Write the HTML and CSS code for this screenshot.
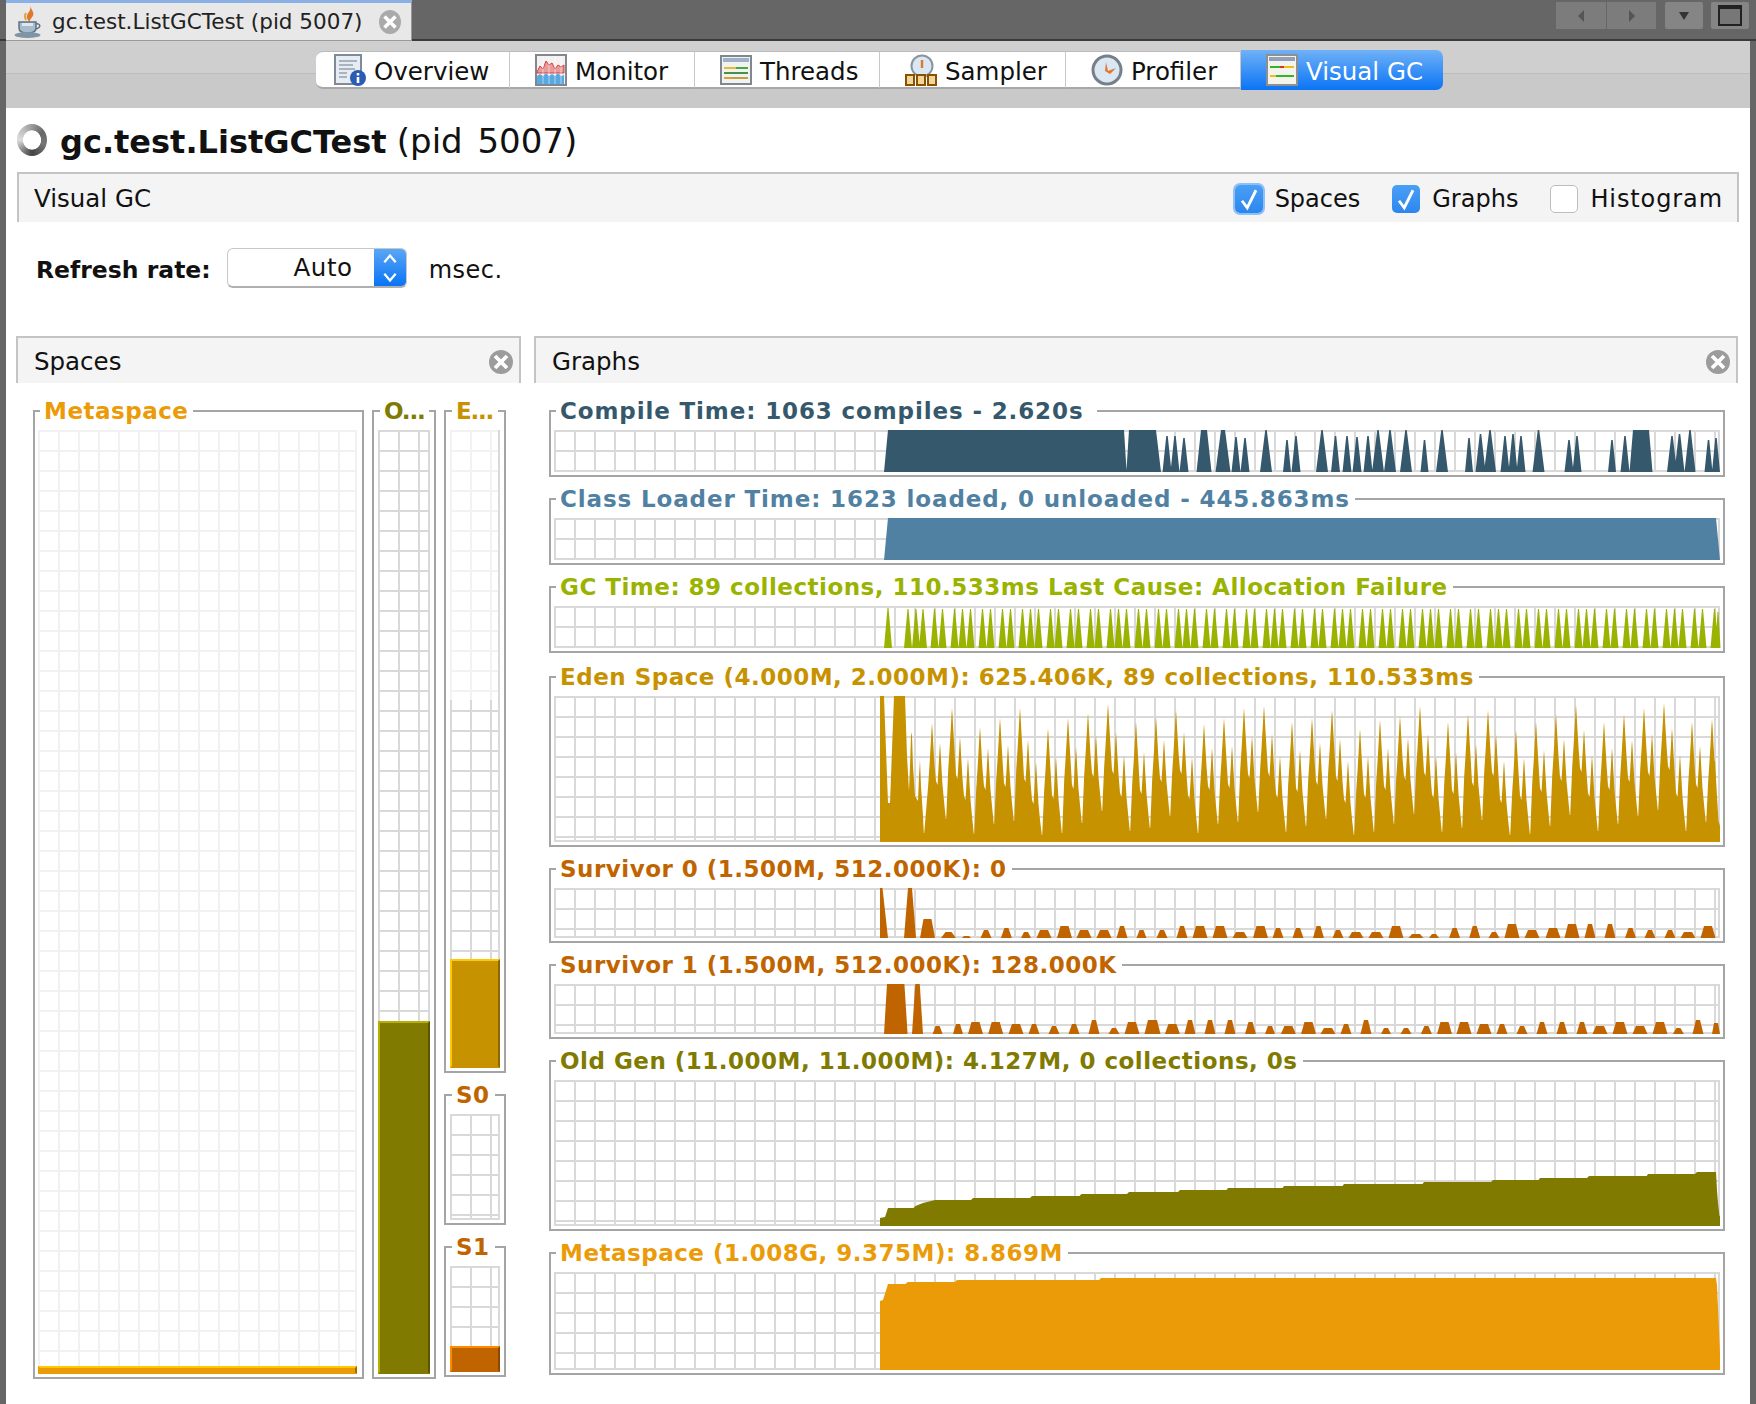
FILE: index.html
```html
<!DOCTYPE html>
<html lang="en">
<head>
    <meta charset="UTF-8">
    <title>gc.test.ListGCTest (pid 5007)</title>
    <link rel="stylesheet" href="styles.css">
</head>
<body>

<div class="doc-bar">
    <div class="doc-tab">
        <svg class="java-icon" viewBox="0 0 28 32" width="28" height="32">
            <path d="M16 0c2 5-4 7-3 12 .4 2 2 3 3 4-1-4 5-5 3-10-1-2-2-4-3-6z" fill="#e0772a"/>
            <path d="M12 7c-2 3-1 5 0 7" fill="none" stroke="#e8a030" stroke-width="2"/>
            <path d="M5 16h17v6c0 3-3 5-8.500 5S5 25 5 22z" fill="#a9bccb" stroke="#5d7384" stroke-width="1.500"/>
            <path d="M22 18c4-1 6 3 0 5" fill="none" stroke="#5d7384" stroke-width="1.500"/>
            <path d="M8 17h11v3H8z" fill="#dfe7ee"/>
            <ellipse cx="13.500" cy="29" rx="13" ry="3" fill="#7f94a5"/>
        </svg>
        <span class="doc-tab-name">gc.test.ListGCTest (pid 5007)</span>
        <span class="close-dot close-dot-tab">
            <svg viewBox="0 0 10 10"><path d="M2.500 2.500l5 5M7.500 2.500l-5 5" stroke="#fff" stroke-width="1.600"/></svg>
        </span>
    </div>
    <div class="win-controls">
        <div class="win-btn win-btn-nav">
            <svg viewBox="0 0 10 14" width="10" height="14"><path d="M8 1v12L2 7z" fill="#555"/></svg>
        </div>
        <div class="win-btn win-btn-nav win-btn-next">
            <svg viewBox="0 0 10 14" width="10" height="14"><path d="M2 1v12l6-6z" fill="#555"/></svg>
        </div>
        <div class="win-btn win-btn-menu">
            <svg viewBox="0 0 12 10" width="12" height="10"><path d="M1 1h10L6 9z" fill="#333"/></svg>
        </div>
        <div class="win-btn win-btn-max"><span class="max-icon"></span></div>
    </div>
</div>

<div class="content">
    <div class="view-bar">
        <div class="view-btn view-btn-first">
            <svg viewBox="0 0 32 32" width="32" height="32">
                <rect x="1" y="1" width="26" height="29" fill="#e6ecf2" stroke="#7f8c98" stroke-width="2"/>
                <path d="M5 7h18M5 11h14M5 15h16M5 19h8M5 23h8" stroke="#a7b4c0" stroke-width="2"/>
                <circle cx="24" cy="24" r="8" fill="#2a5bb5"/>
                <rect x="22.700" y="23" width="2.600" height="6" fill="#fff"/>
                <rect x="22.700" y="19" width="2.600" height="2.500" fill="#fff"/>
            </svg>
            <span>Overview</span>
        </div>
        <div class="view-btn">
            <svg viewBox="0 0 32 32" width="32" height="32">
                <rect x="1" y="1" width="30" height="30" fill="#f6f0f0" stroke="#7f8890" stroke-width="2"/>
                <path d="M2 18l3-6 3 3 3-8 3 4 3-2 3 6 3-4 3 2 3-2v8H2z" fill="#ea9a9a" stroke="#d04040"/>
                <path d="M2 22l3-2 3 2 3-3 3 3 3-2 3 2 3-3 3 3 3-1v9H2z" fill="#5aa8e0"/>
                <path d="M8 2v28M14 2v28M20 2v28M26 2v28" stroke="#fff" stroke-opacity=".5"/>
            </svg>
            <span>Monitor</span>
        </div>
        <div class="view-btn">
            <svg viewBox="0 0 32 32" width="32" height="32">
                <rect x="1" y="2" width="30" height="28" fill="#f2f3f0" stroke="#7f8890" stroke-width="2"/>
                <rect x="3" y="4" width="26" height="4" fill="#9fb0c8"/>
                <path d="M4 14h12" stroke="#e0c030" stroke-width="2"/>
                <path d="M16 14h12" stroke="#3fae3f" stroke-width="2"/>
                <path d="M4 19h24" stroke="#4a8f4a" stroke-width="2"/>
                <path d="M4 24h8" stroke="#e0a030" stroke-width="2"/>
                <path d="M12 24h16" stroke="#c0a040" stroke-width="2"/>
            </svg>
            <span>Threads</span>
        </div>
        <div class="view-btn">
            <svg viewBox="0 0 32 32" width="32" height="32">
                <circle cx="17" cy="12" r="10.500" fill="#dbe7f2" stroke="#8a949e" stroke-width="2"/>
                <path d="M17 6v8" stroke="#e0772a" stroke-width="2.400"/>
                <rect x="1" y="21" width="8" height="10" fill="#f0d69a" stroke="#8a5200" stroke-width="2"/>
                <rect x="12" y="21" width="8" height="10" fill="#f0d69a" stroke="#8a5200" stroke-width="2"/>
                <rect x="23" y="21" width="8" height="10" fill="#f0d69a" stroke="#8a5200" stroke-width="2"/>
            </svg>
            <span>Sampler</span>
        </div>
        <div class="view-btn">
            <svg viewBox="0 0 32 32" width="32" height="32">
                <circle cx="16" cy="16" r="14" fill="#dbe8f4" stroke="#77808a" stroke-width="3"/>
                <path d="M15 8l2 9 8-3-6 6-5-3z" fill="#e0772a"/>
            </svg>
            <span>Profiler</span>
        </div>
        <div class="view-btn view-btn-active">
            <svg viewBox="0 0 32 32" width="32" height="32">
                <rect x="1" y="1" width="30" height="30" fill="#f4f4ec" stroke="#8f8f8f" stroke-width="2"/>
                <rect x="3" y="3" width="26" height="4" fill="#8ea0bc"/>
                <path d="M4 13h10" stroke="#2fb52f" stroke-width="2"/>
                <path d="M14 13h4" stroke="#e03020" stroke-width="2"/>
                <path d="M18 13h10" stroke="#e8c020" stroke-width="2"/>
                <path d="M4 22h6" stroke="#e8c020" stroke-width="2"/>
                <path d="M10 22h18" stroke="#2fb52f" stroke-width="2"/>
            </svg>
            <span>Visual GC</span>
        </div>
    </div>

    <div class="title-row">
        <span class="busy-ring"></span>
        <h1 class="title"><b>gc.test.ListGCTest</b> <span class="title-pid">(pid 5007)</span></h1>
    </div>

    <div class="section-head section-head-main">
        <span class="section-name">Visual GC</span>
        <div class="checks">
            <div class="check-item">
                <span class="check check-on check-focus"><svg viewBox="0 0 16 16"><path d="M4 9l3 4 5-10" fill="none" stroke="#fff" stroke-width="1.600"/></svg></span>
                <span>Spaces</span>
            </div>
            <div class="check-item">
                <span class="check check-on"><svg viewBox="0 0 16 16"><path d="M4 9l3 4 5-10" fill="none" stroke="#fff" stroke-width="1.600"/></svg></span>
                <span>Graphs</span>
            </div>
            <div class="check-item">
                <span class="check"></span>
                <span class="check-label-wide">Histogram</span>
            </div>
        </div>
    </div>

    <div class="refresh-row">
        <b>Refresh rate:</b>
        <div class="rate-select">
            <span class="rate-value">Auto</span>
            <span class="rate-arrows">
                <svg viewBox="0 0 14 30" width="16" height="34"><path d="M2 10l5-6 5 6M2 20l5 6 5-6" fill="none" stroke="#fff" stroke-width="2"/></svg>
            </span>
        </div>
        <span class="rate-unit">msec.</span>
    </div>

    <div class="panels">
        <section class="panel panel-spaces">
            <div class="section-head">
                <span>Spaces</span>
                <span class="close-dot"><svg viewBox="0 0 10 10"><path d="M2.500 2.500l5 5M7.500 2.500l-5 5" stroke="#fff" stroke-width="1.600"/></svg></span>
            </div>
            <div class="spaces-body">
                <fieldset class="box box-meta">
                    <legend class="c-meta">Metaspace</legend>
                    <div class="plot plot-light plot-fill plot-h944">
                        <div class="bar bar-meta"></div>
                    </div>
                </fieldset>
                <fieldset class="box box-old">
                    <legend class="c-old legend-short">O...</legend>
                    <div class="plot plot-fill plot-h944">
                        <div class="bar bar-old"></div>
                    </div>
                </fieldset>
                <div class="young-col">
                    <fieldset class="box box-eden">
                        <legend class="c-eden legend-short">E...</legend>
                        <div class="plot plot-fill plot-h638">
                            <div class="uncommitted"></div>
                            <div class="bar bar-eden"></div>
                        </div>
                    </fieldset>
                    <fieldset class="box box-surv">
                        <legend class="c-surv">S0</legend>
                        <div class="plot plot-fill plot-h106"></div>
                    </fieldset>
                    <fieldset class="box box-surv">
                        <legend class="c-surv">S1</legend>
                        <div class="plot plot-fill plot-h106">
                            <div class="bar bar-surv"></div>
                        </div>
                    </fieldset>
                </div>
            </div>
        </section>

        <section class="panel panel-graphs">
            <div class="section-head">
                <span>Graphs</span>
                <span class="close-dot"><svg viewBox="0 0 10 10"><path d="M2.500 2.500l5 5M7.500 2.500l-5 5" stroke="#fff" stroke-width="1.600"/></svg></span>
            </div>
            <div class="graphs-body">
                <fieldset class="box">
                    <legend class="c-compile legend-wide">Compile Time: 1063 compiles - 2.620s&nbsp;</legend>
                    <div class="plot plot-h42"><svg class="chart c-compile" data-chart="compile" preserveAspectRatio="none"></svg></div>
                </fieldset>
                <fieldset class="box">
                    <legend class="c-class legend-wide">Class Loader Time: 1623 loaded, 0 unloaded - 445.863ms</legend>
                    <div class="plot plot-h42"><svg class="chart c-class" data-chart="classes" preserveAspectRatio="none"></svg></div>
                </fieldset>
                <fieldset class="box">
                    <legend class="c-gc">GC Time: 89 collections, 110.533ms Last Cause: Allocation Failure</legend>
                    <div class="plot plot-h42"><svg class="chart c-gc" data-chart="gc" preserveAspectRatio="none"></svg></div>
                </fieldset>
                <fieldset class="box box-graph-eden">
                    <legend class="c-eden">Eden Space (4.000M, 2.000M): 625.406K, 89 collections, 110.533ms</legend>
                    <div class="plot plot-h146"><svg class="chart c-eden" data-chart="eden" preserveAspectRatio="none"></svg></div>
                </fieldset>
                <fieldset class="box">
                    <legend class="c-surv">Survivor 0 (1.500M, 512.000K): 0</legend>
                    <div class="plot plot-h50"><svg class="chart c-surv" data-chart="s0" preserveAspectRatio="none"></svg></div>
                </fieldset>
                <fieldset class="box">
                    <legend class="c-surv">Survivor 1 (1.500M, 512.000K): 128.000K</legend>
                    <div class="plot plot-h50"><svg class="chart c-surv" data-chart="s1" preserveAspectRatio="none"></svg></div>
                </fieldset>
                <fieldset class="box">
                    <legend class="c-old">Old Gen (11.000M, 11.000M): 4.127M, 0 collections, 0s</legend>
                    <div class="plot plot-h146"><svg class="chart c-old" data-chart="old" preserveAspectRatio="none"></svg></div>
                </fieldset>
                <fieldset class="box">
                    <legend class="c-meta">Metaspace (1.008G, 9.375M): 8.869M</legend>
                    <div class="plot plot-h98"><svg class="chart c-meta" data-chart="meta" preserveAspectRatio="none"></svg></div>
                </fieldset>
            </div>
        </section>
    </div>
</div>

<script src="charts.js"></script>
</body>
</html>
```
FILE: styles.css
```css
* {
    box-sizing: border-box;
}

html, body {
    margin: 0;
    height: 1404px;
    overflow: hidden;
}

body {
    background-color: #666;
    color: #111;
    font-family: "DejaVu Sans", "Liberation Sans", sans-serif;
    font-size: 24px;
}

/* top document tab strip */
.doc-bar {
    display: flex;
    height: 41px;
    padding-left: 6px;
    border-bottom: 2px solid #3a3a3a;
}

.doc-tab {
    display: flex;
    align-items: center;
    width: 406px;
    height: 41px;
    padding: 0 10px 0 8px;
    background: #e8e8e8;
    border-top: 3px solid #8ab0e6;
    border-bottom: 1px solid #9a9a9a;
    border-right: 1px solid #9a9a9a;
    font-size: 21.500px;
    color: #222;
}

.java-icon {
    flex: none;
    margin-right: 10px;
}

.doc-tab-name {
    flex: 1;
    white-space: nowrap;
}

.close-dot {
    display: block;
    width: 24px;
    height: 24px;
    border-radius: 50%;
    background: #9c9c9c;
}

.close-dot svg {
    display: block;
    width: 100%;
    height: 100%;
}

.close-dot-tab {
    width: 22px;
    background: #aaa;
}

.win-controls {
    display: flex;
    margin-left: auto;
    padding: 2px 7px 0 0;
}

.win-btn {
    display: flex;
    align-items: center;
    justify-content: center;
    width: 50px;
    height: 27px;
    background: #7c7c7c;
}

.win-btn-next {
    width: 49px;
    margin-left: 1px;
    margin-right: 9px;
}

.win-btn-menu {
    width: 38px;
    margin-right: 8px;
    border-radius: 2px;
    background: #858585;
}

.win-btn-max {
    width: 38px;
    border-radius: 2px;
    background: #858585;
}

.max-icon {
    display: block;
    width: 24px;
    height: 21px;
    border: 2px solid #222;
    border-top-width: 4px;
    background: #777;
}

.content {
    height: 1363px;
    margin: 0 6px;
    background: #fff;
}

/* view switcher */
.view-bar {
    display: flex;
    align-items: flex-start;
    height: 67px;
    padding: 10px 0 0 310px;
    background: linear-gradient(#cfcfcf 0, #cfcfcf 32px, #bdbdbd 32px, #bdbdbd 33px, #c9c9c9 33px);
}

.view-btn {
    display: flex;
    align-items: center;
    gap: 8px;
    width: 185px;
    height: 38px;
    padding-left: 25px;
    background: #fff;
    border-top: 1px solid #bbb;
    border-bottom: 2px solid #a8a8a8;
    border-right: 1px solid #c8c8c8;
    font-size: 24.500px;
    white-space: nowrap;
}

.view-btn span {
    padding-top: 3px;
}

.view-btn:nth-child(1) {
    width: 194px;
    padding-left: 18px;
    border-radius: 7px 0 0 7px;
}

.view-btn:nth-child(4) {
    width: 186px;
}

.view-btn:nth-child(5) {
    width: 175px;
}

.view-btn-active {
    width: 202px;
    height: 40px;
    margin-top: -1px;
    border: none;
    border-radius: 0 7px 7px 0;
    background: linear-gradient(#6fb1f7, #0a74f5);
    color: #fff;
}

.title-row {
    display: flex;
    align-items: center;
    gap: 13px;
    height: 64px;
    padding-left: 11px;
}

.busy-ring {
    flex: none;
    width: 30px;
    height: 32px;
    border-radius: 50%;
    background: radial-gradient(closest-side, #fff 58%, transparent 62%),
        conic-gradient(#999, #666 15%, #777 30%, #444 50%, #888 62%, #ddd 75%, #bbb 90%, #999);
}

.title {
    margin: 0;
    padding-top: 2px;
    font-size: 32px;
    font-weight: normal;
    color: #111;
    white-space: nowrap;
}

.title-pid {
    font-size: 34px;
    word-spacing: 4px;
}

/* grey titled strip */
.section-head {
    display: flex;
    align-items: center;
    justify-content: space-between;
    height: 47px;
    padding: 2px 6px 0 16px;
    background: #f4f4f4;
    border: 2px solid #c4c4c4;
    border-bottom: none;
    font-size: 24.500px;
}

.section-head-main {
    height: 50px;
    margin: 0 11px 0 11px;
    padding-left: 15px;
    padding-right: 14px;
}

.section-name {
    margin-top: -2px;
}

.checks {
    display: flex;
    gap: 32px;
    font-size: 24px;
}

.check-item {
    display: flex;
    align-items: center;
    gap: 12px;
}

.check-label-wide {
    letter-spacing: .9px;
}

.check {
    display: block;
    width: 28px;
    height: 28px;
    border: 1px solid #bdbdbd;
    border-radius: 5px;
    background: #fff;
}

.check svg {
    display: block;
    width: 100%;
    height: 100%;
}

.check-on {
    border: none;
    background: linear-gradient(#4a9ff5, #2c86ee);
}

.check-focus {
    box-shadow: 0 0 0 2px #8ec0f8;
}

.refresh-row {
    display: flex;
    align-items: flex-start;
    gap: 16px;
    height: 114px;
    padding: 25px 0 0 30px;
    line-height: 46px;
}

.refresh-row b {
    font-size: 23.500px;
}

.rate-select {
    display: flex;
    width: 180px;
    height: 40px;
    margin: 1px 6px 0 0;
    border: 1px solid #c8c8c8;
    border-bottom: 2px solid #b0b0b0;
    border-radius: 6px;
    overflow: hidden;
}

.rate-value {
    flex: 1;
    padding-right: 21px;
    text-align: right;
    font-size: 24.500px;
    letter-spacing: .6px;
    line-height: 37px;
}

.rate-arrows {
    display: flex;
    align-items: center;
    justify-content: center;
    width: 32px;
    background: linear-gradient(#5aa6f6, #0a74f5);
}

.rate-unit {
    letter-spacing: .5px;
}

.panels {
    display: flex;
    gap: 13px;
    padding: 0 12px 0 10px;
}

.panel-spaces {
    flex: none;
    width: 505px;
}

.panel-graphs {
    flex: 1;
    min-width: 0;
}

.spaces-body {
    display: flex;
    gap: 8px;
    height: 996px;
    padding: 14px 0 0 17px;
}

.graphs-body {
    display: flex;
    flex-direction: column;
    gap: 8px;
    padding: 14px 13px 0 15px;
}

/* titled border */
.box {
    min-width: 0;
    margin: 0;
    padding: 5px 3px 3px 3px;
    border: 2px solid #a5a5a5;
}

.box legend {
    margin-left: 2px;
    padding: 0 5px 0 4px;
    height: 28px;
    font-size: 23px;
    font-weight: bold;
    line-height: 28px;
    letter-spacing: .5px;
    white-space: nowrap;
}

.box legend.legend-wide {
    letter-spacing: .88px;
}

.box legend.legend-short {
    letter-spacing: -1.200px;
}

.box-graph-eden {
    margin-top: 2px;
}

.box-meta {
    flex: none;
    width: 331px;
    padding-right: 5px;
}

.box-old {
    flex: none;
    width: 64px;
    padding: 5px 4px 3px 4px;
}

.young-col {
    display: flex;
    flex: none;
    flex-direction: column;
    gap: 8px;
    width: 62px;
    height: 980px;
}

.young-col .box {
    padding: 5px 4px 3px 4px;
}

.box-eden {
    flex: none;
}

.box-surv {
    flex: none;
}

/* chart paper */
.plot {
    background-color: #fff;
    background-image: linear-gradient(#d9d9d9 2px, transparent 2px),
        linear-gradient(90deg, #d9d9d9 2px, transparent 2px);
    background-size: 20px 20px;
    border-right: 2px solid #d9d9d9;
    border-bottom: 2px solid #d9d9d9;
}

.plot-light {
    background-image: linear-gradient(#f1f1f1 2px, transparent 2px),
        linear-gradient(90deg, #f1f1f1 2px, transparent 2px);
    border-color: #f1f1f1;
}

.plot-fill {
    display: flex;
    flex-direction: column;
    justify-content: flex-end;
}

.plot-h42 { height: 42px; }
.plot-h50 { height: 50px; }
.plot-h98 { height: 98px; }
.plot-h106 { height: 106px; }
.plot-h146 { height: 146px; }
.plot-h638 { height: 638px; }
.plot-h944 { height: 944px; }

.chart {
    display: block;
    width: calc(100% + 2px);
    height: calc(100% + 2px);
    overflow: visible;
    fill: currentColor;
}

.uncommitted {
    flex: none;
    height: 270px;
    background: rgba(255, 255, 255, .65);
}

.bar {
    flex: none;
    margin: 0 -2px -2px 0;
    border-style: solid;
    border-width: 2px;
}

.uncommitted + .bar {
    margin-top: auto;
}

.bar-meta {
    height: 8px;
    background: #eb9b08;
    border-color: #ffc800 #a06a00 #eb9b08 #eb9b08;
}

.bar-old {
    height: 353px;
    background: #807a00;
    border-color: #b8b000 #5a5500 #807a00 #b8b000;
}

.bar-eden {
    height: 109px;
    background: #c79200;
    border-color: #ffc800 #8c6600 #c79200 #ffc800;
}

.bar-surv {
    height: 26px;
    background: #c06400;
    border-color: #ff8c00 #8c4800 #c06400 #ff8c00;
}

.c-compile { color: #35586c; }
.c-class { color: #5181a2; }
.c-gc { color: #9ab300; }
.c-eden { color: #c79200; }
.c-surv { color: #c06400; }
.c-old { color: #807a00; }
.c-meta { color: #eb9b08; }
```
FILE: charts.js
```js
// history graphs of the Visual GC tab, x values are window pixels

const PLOT_LEFT = 554;
const PLOT_WIDTH = 1166;

// bump on the floor of a plot
function bump(x, h, floor, base, top) {
    const b = base / 2;
    const t = top / 2;
    return `M${x - b} ${floor}L${x - t} ${floor - h}L${x + t} ${floor - h}L${x + b} ${floor}Z`;
}

function poly(points) {
    return "M" + points.map(p => p.join(" ")).join("L") + "Z";
}

// every gc run shows up in the same groups, 8px apart, 12px between groups
const edenTops = [
    [27, 47], [12, 41, 62], [31, 52], [22, 49], [12, 44, 66], [32, 61], [22, 51], [17, 39], [8, 36, 59],
    [26, 56], [21, 44], [14, 36, 61], [28, 52], [22, 50], [12, 40], [10, 38, 60], [26, 54], [22, 47],
    [14, 43, 65], [33, 60], [24, 52], [20, 42], [10, 38, 60], [26, 56], [18, 48], [14, 38, 65], [34, 62],
    [26, 54], [18, 43], [9, 34, 59], [26, 52], [18, 44], [12, 38], [7, 32, 59], [26, 50], [23]
];

function edenPath() {
    const pts = [[880, 146], [880, 0], [884, 0], [888, 107], [890, 107], [894, 0], [905, 0],
        [907, 60], [909, 95], [910, 70], [911, 40], [911.5, 36], [912, 40], [913, 70], [915, 100],
        [918, 105], [919, 80], [920, 64], [921, 90], [923, 120], [923.8, 137], [924.2, 137]];
    let x = 932;
    edenTops.forEach((group, g) => {
        group.forEach((t, i) => {
            if (i === 0) {
                pts.push([x - 3.8, Math.min(t + 62, 139)]);
            }
            pts.push([x - 2.5, t + 42], [x - 1.2, t + 20], [x - 0.5, t + 7], [x, t],
                [x + 0.5, t + 7], [x + 1.2, t + 20], [x + 2.5, t + 42]);
            if (i < group.length - 1) {
                pts.push([x + 4, Math.max(group[i + 1] + 38, t + 58)]);
                x += 8;
            }
        });
        if (g < edenTops.length - 1) {
            const last = group[group.length - 1];
            const floor = Math.min(last + 76, 139);
            pts.push([x + 4, last + 58], [x + 5.8, floor], [x + 6.2, floor]);
            x += 12;
        }
    });
    pts.push([1715, 65], [1717, 100], [1718.5, 125], [1720, 130], [1720, 146]);
    return poly(pts);
}

function gcPath() {
    let d = bump(888, 40, 42, 8, 1) + bump(908, 39, 42, 8, 1) + bump(916, 39, 42, 8, 1) + bump(923, 39, 42, 8, 1)
        + bump(1718, 36, 42, 5, 1);
    let x = 934.5;
    edenTops.forEach(group => {
        group.forEach((t, i) => {
            d += bump(x, 39, 42, 8, 1);
            if (i < group.length - 1) {
                x += 8;
            }
        });
        x += 12;
    });
    return d;
}

const compileSpikes = [
    [1167, 36, 9], [1175, 36, 9], [1184, 34, 9], [1204, 42, 15, 6], [1223, 42, 15, 4], [1236, 35, 9], [1245, 34, 9],
    [1266, 42, 12], [1287, 32, 8], [1296, 36, 9], [1322, 42, 12], [1335.5, 36, 9], [1347, 36, 9], [1357, 35, 9],
    [1368, 36, 9], [1378, 42, 12], [1390, 42, 12], [1406, 42, 12], [1424.5, 32, 8], [1442, 42, 12], [1469, 34, 8],
    [1480.5, 38, 10], [1490, 42, 12], [1505, 36, 9], [1513, 38, 9], [1521, 36, 9], [1538.5, 42, 12], [1569, 32, 9],
    [1577, 36, 9], [1612, 32, 8], [1625, 36, 9], [1641, 42, 23, 16], [1672, 36, 10], [1679.5, 38, 10], [1690, 42, 11],
    [1708.5, 32, 8], [1716, 34, 8]
];

function compilePath() {
    let d = poly([[884, 42], [888, 0], [1124, 0], [1126.5, 40], [1129, 0], [1156, 0], [1161, 42]]);
    compileSpikes.forEach(s => {
        d += bump(s[0], s[1], 42, s[2], s[3] || 1.5);
    });
    return d;
}

// [x, height, base width]
const s0Bumps = [
    [986, 8, 11], [1006.4, 10, 11], [1026, 6, 10], [1044, 8, 15], [1064.5, 12, 15], [1084, 8, 15], [1104, 8, 15],
    [1122, 12, 11], [1141.5, 8, 10], [1162, 8, 11], [1182, 12, 11], [1200, 12, 15], [1220, 12, 15], [1240, 6, 15],
    [1260.5, 12, 15], [1278, 10, 11], [1298, 10, 11], [1318.5, 12, 11], [1338, 8, 11], [1356, 6, 15], [1376, 6, 15],
    [1396, 12, 15], [1416, 4, 15], [1434, 4, 10], [1454.6, 10, 11], [1474.7, 12, 11], [1494, 6, 11], [1512, 14, 15],
    [1532, 8, 15], [1553, 10, 15], [1572, 14, 15], [1590, 14, 11], [1610, 14, 11], [1630.5, 10, 11], [1650, 8, 11],
    [1670, 8, 11], [1688, 6, 15], [1708, 12, 15]
];

const s1Bumps = [
    [937.6, 8, 10], [958, 10, 10], [975.5, 12, 15], [995.7, 12, 15], [1016, 10, 15], [1034, 10, 11], [1054, 8, 11],
    [1074, 10, 11], [1094, 14, 11], [1114, 6, 11], [1132, 12, 15], [1152, 14, 15], [1172.4, 10, 15], [1190, 14, 11],
    [1210, 14, 11], [1230, 14, 11], [1250.5, 12, 11], [1270, 8, 10], [1288.4, 8, 15], [1308.5, 12, 15], [1328, 6, 15],
    [1346, 10, 11], [1366, 14, 11], [1386, 6, 10], [1406, 6, 11], [1426.4, 8, 11], [1444.5, 12, 15], [1464, 12, 15],
    [1484, 10, 15], [1502, 10, 11], [1522, 8, 11], [1542, 12, 11], [1562, 12, 11], [1582, 12, 11], [1600, 8, 15],
    [1620, 12, 15], [1640, 8, 15], [1660, 12, 15], [1678.4, 6, 11], [1698, 14, 11], [1716, 11, 8]
];

function survivorPath(list, lead) {
    let d = lead;
    list.forEach(b => {
        d += bump(b[0], b[1], 50, b[2], b[2] > 12 ? 8 : 4);
    });
    return d;
}

const oldSteps = [
    [880, 146], [880, 138], [885, 137], [888, 128], [913.5, 128], [915.5, 126], [923, 123], [935, 120], [971, 120],
    [973, 118], [1030, 118], [1032, 116], [1079.5, 116], [1081.5, 114], [1127, 114], [1129, 112], [1178, 112],
    [1180, 110], [1226.5, 110], [1228, 108], [1282.6, 108], [1284, 106], [1342.5, 106], [1344, 104], [1422.5, 104],
    [1424, 102], [1491, 102], [1493, 100], [1538.5, 100], [1540, 98], [1587, 98], [1589, 96], [1646.7, 96], [1648, 94],
    [1695, 94], [1697, 92], [1716, 92], [1717, 110], [1718, 123], [1719.5, 136], [1720, 136], [1720, 146]
];

const metaSteps = [
    [880, 98], [880, 29], [883, 28], [888, 12], [905.6, 12], [907.6, 10], [955, 10], [957, 8], [1099, 8], [1101, 6],
    [1716, 6], [1717, 13], [1718, 35], [1719, 58], [1720, 81], [1720, 98]
];

const charts = {
    compile: { h: 42, d: compilePath() },
    classes: { h: 42, d: poly([[884, 42], [888, 0], [1716, 0], [1720, 42]]) },
    gc: { h: 42, d: gcPath() },
    eden: { h: 146, d: edenPath() },
    s0: {
        h: 50,
        d: survivorPath(s0Bumps, poly([[880, 50], [880, 0], [882.5, 0], [888, 50]]) + bump(910, 50, 50, 12, 4)
            + bump(927.5, 19, 50, 15, 8) + bump(948.5, 6, 50, 15, 6) + bump(966.5, 2, 50, 9, 5))
    },
    s1: {
        h: 50,
        d: survivorPath(s1Bumps, poly([[884, 50], [887, 0], [904.4, 0], [907.6, 50]]) + bump(917.5, 50, 50, 11, 4.5)
            + bump(1153, 14, 50, 15, 8))
    },
    old: { h: 146, d: poly(oldSteps) },
    meta: { h: 98, d: poly(metaSteps) }
};

document.querySelectorAll(".chart").forEach(svg => {
    const chart = charts[svg.dataset.chart];
    svg.setAttribute("viewBox", `${PLOT_LEFT} 0 ${PLOT_WIDTH} ${chart.h}`);
    const path = document.createElementNS("http://www.w3.org/2000/svg", "path");
    path.setAttribute("d", chart.d);
    svg.appendChild(path);
});
```
